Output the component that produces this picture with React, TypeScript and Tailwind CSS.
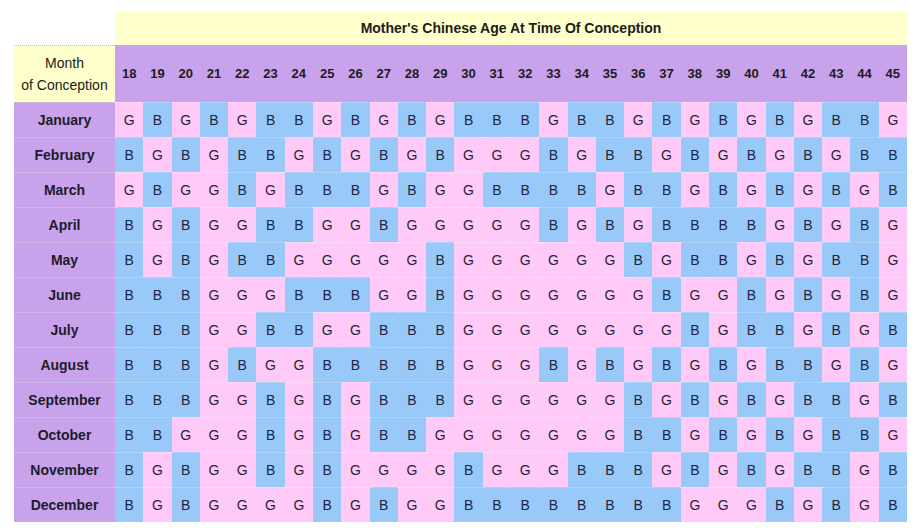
const AGES = Array.from({ length: 28 }, (_, i) => 18 + i);

// one string per month, ages 18 → 45
const CHART: [string, string][] = [
  ['January', 'GBGBGBBGBGBGBBBGBBGBGBGBGBBG'],
  ['February', 'BGBGBBGBGBGBGGGBGBBGBGBGBGBB'],
  ['March', 'GBGGBGBBBGBGGBBBBGBBGBGBGBGB'],
  ['April', 'BGBGGBBGGBGGGGGBGBGBBBBGBGBG'],
  ['May', 'BGBGBBGGGGGBGGGGGGBGBBGBGBBG'],
  ['June', 'BBBGGGBBBGGBGGGGGGGBGGBGBGBG'],
  ['July', 'BBBGGBBGGBBBGGGGGGGGBGBBGBGB'],
  ['August', 'BBBGBGGBBBBBGGGBGBGBGBGBBGBG'],
  ['September', 'BBBGGBGBGBBBGGGGGGBGBGBGBBGB'],
  ['October', 'BBGGGBGBGBBGGGGGGGBBGBGBGBBG'],
  ['November', 'BGBGGBGBGGGGBGGGBBBGBGBGBBGB'],
  ['December', 'BGBGGGGBGBGGBBBBBBBBGGGBGBGB'],
];

export default function App() {
  return (
    <div className="h-[528px] w-[915px] bg-white pl-[14px] pt-[11px] font-['Liberation_Sans',Arial,sans-serif]">
      <div className="grid w-[893px] grid-cols-[101px_repeat(28,minmax(0,1fr))]">
        {/* title */}
        <div />
        <div className="col-span-28 flex h-[34px] items-center justify-center bg-[#ffffcc] text-[14px] font-bold text-[#1c1c1c]">
          Mother&apos;s Chinese Age At Time Of Conception
        </div>

        {/* ages header */}
        <div className="flex h-[57px] flex-col items-center justify-center border-t border-dotted border-[#bdbdbd] bg-[#ffffcc] text-[14px] leading-[22px] text-[#1c1c1c]">
          <span>Month</span>
          <span>of Conception</span>
        </div>
        {AGES.map((age) => (
          <div
            key={age}
            className="flex h-[57px] items-center justify-center bg-[#c9a2ec] text-[13px] font-bold text-[#1c1c1c]"
          >
            {age}
          </div>
        ))}

        {/* months */}
        {CHART.map(([month, row]) => (
          <div key={month} className="contents">
            <div className="flex h-[35px] items-center justify-center border-t border-dotted border-[#d9c4f3] bg-[#c9a2ec] text-[14px] font-bold text-[#1c1c2a]">
              {month}
            </div>
            {row.split('').map((v, i) => (
              <div
                key={i}
                className={
                  v === 'G'
                    ? 'flex h-[35px] items-center justify-center border-t border-dotted border-[#ffe2fb] bg-[#ffc9f8] text-[14px] text-[#2a1f3a]'
                    : 'flex h-[35px] items-center justify-center border-t border-dotted border-[#b8dcfc] bg-[#99c9f9] text-[14px] text-[#1f2440]'
                }
              >
                {v}
              </div>
            ))}
          </div>
        ))}
      </div>
    </div>
  );
}
